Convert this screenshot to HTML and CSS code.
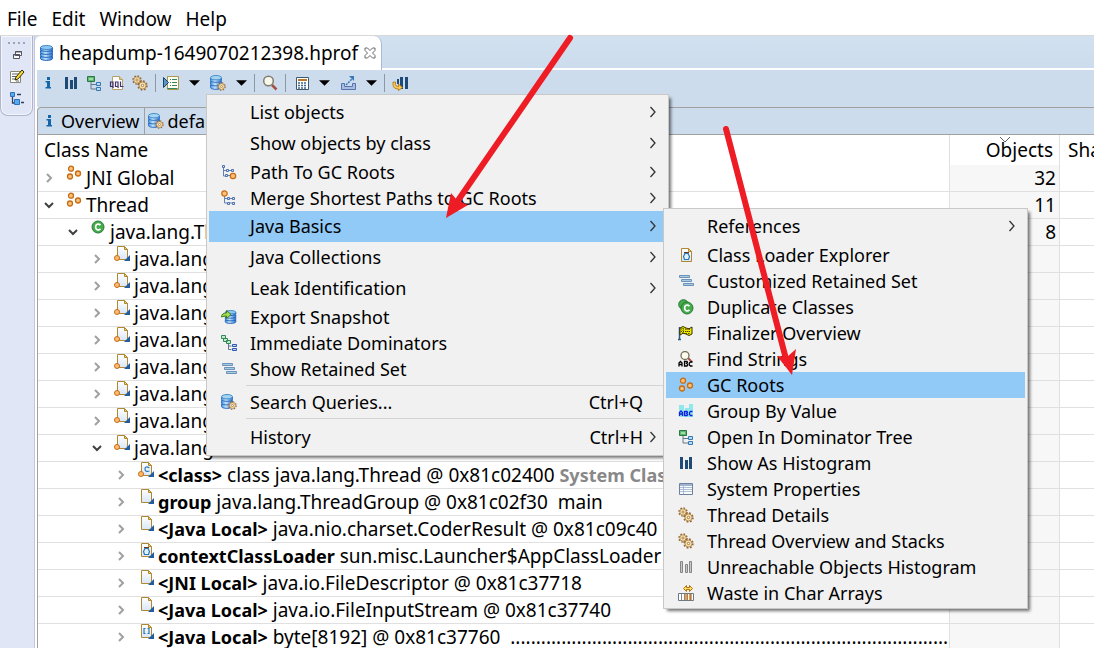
FILE: index.html
```
<!DOCTYPE html>
<html lang="en">
<head>
<meta charset="utf-8">
<title>Memory Analyzer</title>
<link rel="stylesheet" href="styles.css">
</head>
<body>
<svg class="defs" aria-hidden="true">
  <linearGradient id="g-db" x1="0" x2="1"><stop offset="0" stop-color="#3f90dc"/><stop offset=".4" stop-color="#c4e4fa"/><stop offset="1" stop-color="#2c70cc"/></linearGradient>
  <linearGradient id="g-doc" x1="0" x2="0" y1="0" y2="1"><stop offset="0" stop-color="#fff"/><stop offset="1" stop-color="#d8e6f8"/></linearGradient>
  <symbol id="db" viewBox="0 0 16 16"><g fill="url(#g-db)" stroke="#1f62b8"><path d="M1.500 11.500v2c0 2.500 12 2.500 12 0v-2z"/><path d="M1.500 8.500v2c0 2.500 12 2.500 12 0v-2z"/><path d="M1.500 5.500v2c0 2.500 12 2.500 12 0v-2z"/><path d="M1.500 2.500v2c0 2.500 12 2.500 12 0v-2z"/></g><ellipse cx="7.500" cy="2.500" rx="6" ry="2" fill="#8cc8ee" stroke="#3f86c8"/></symbol>
  <symbol id="gear" viewBox="0 0 10 10"><circle cx="5" cy="5" r="4" fill="none" stroke="#94683a" stroke-width="1.500" stroke-dasharray="1.600 1.540"/><circle cx="5" cy="5" r="3.200" fill="#fbe6ae" stroke="#a87c40" stroke-width=".8"/><circle cx="5" cy="5" r="1.100" fill="#fff" stroke="#94683a" stroke-width=".8"/></symbol>
  <symbol id="dbgear" viewBox="0 0 16 16"><g fill="url(#g-db)" stroke="#2c6cc0" stroke-width=".9"><path d="M.5 10v2.500c0 2.500 11 2.500 11 0V10z"/><path d="M.5 6.500V9c0 2.500 11 2.500 11 0V6.500z"/><path d="M.5 3v2.500c0 2.500 11 2.500 11 0V3z"/></g><ellipse cx="6" cy="2.700" rx="5.500" ry="2.200" fill="#a4d4f0" stroke="#4890cc"/><use href="#gear" x="7" y="7" width="9" height="9"/></symbol>
  <symbol id="gears" viewBox="0 0 16 16"><use href="#gear" x="0" y="0" width="10" height="10"/><use href="#gear" x="5" y="5" width="11" height="11"/></symbol>
  <symbol id="info" viewBox="0 0 16 16"><path d="M7 2h3v3H7zM5.500 6H10v6h1v1.500H5.500V12H7V7.500H5.500z" fill="#1466a8"/></symbol>
  <symbol id="bars" viewBox="0 0 16 16"><path d="M2 2h3v12H2zM7 5h3v9H7zM11 2h3v12h-3z" fill="#1f4a78"/></symbol>
  <symbol id="graybars" viewBox="0 0 16 16"><path d="M2.500 2.500h2v11h-2zM7.500 5.500h2v8h-2zM11.500 2.500h2v11h-2z" fill="#c8c8c8" stroke="#858585"/></symbol>
  <symbol id="tree" viewBox="0 0 16 16"><path d="M5 7v7h5M5 9.500h5" fill="none" stroke="#60788c"/><path d="M1.500 1.500h7v5h-7z" fill="#60b870" stroke="#267845"/><path d="M3 3h4v2H3z" fill="#a0dca0"/><path d="M10.500 7.500h4v3h-4zM10.500 12.500h4v3h-4z" fill="#b4dcf8" stroke="#3878b0"/></symbol>
  <symbol id="oql" viewBox="0 0 16 16"><path d="M3.500 1.500h7l3 3v10h-10z" fill="#fff" stroke="#b8a068"/><path d="M10.500 1.500v3h3" fill="#e8c878" stroke="#b8a068"/><path d="M1.500 7h2.500v4.500H1.500zM3 11l1.500 2M6.500 7H9v4.500H6.500zM8 11l1.500 2M11.500 6.500v5h3" fill="none" stroke="#40306c" stroke-width="1.200"/></symbol>
  <symbol id="script" viewBox="0 0 16 16"><path d="M4.500 1.500h11v13h-11z" fill="#fffef0" stroke="#a89850"/><path d="M7 4.500h1M9 4.500h5M7 7.500h1M9 7.500h5M7 10.500h1M9 10.500h5M4.500 13.500h10" stroke="#2e8860"/><path d="M.5 2.500v10l5-5z" fill="#5896c8" stroke="#1a4470"/></symbol>
  <symbol id="search" viewBox="0 0 16 16"><path d="M10 10l4.500 4.500" stroke="#a45040" stroke-width="2.500"/><circle cx="6.500" cy="6" r="4.800" fill="#f8f8ec" stroke="#817d70" stroke-width="1.500"/></symbol>
  <symbol id="calc" viewBox="0 0 16 16"><path d="M3.500 2.500h12v12h-12z" fill="#fff" stroke="#40586c"/><path d="M5 4h9v2H5z" fill="#b8782c"/><path d="M5 8h9M5 10.500h9M5 13h9" stroke="#40668c" stroke-width="1.500" stroke-dasharray="2 1"/></symbol>
  <symbol id="export" viewBox="0 0 16 16"><path d="M1.500 8.500v6h14v-6h-3v3h-8v-3z" fill="#a8bce0" stroke="#5874b0"/><path d="M6 10l6-6" stroke="#3478b8" stroke-width="1.500" stroke-dasharray="2 1"/><path d="M9 1h5v5z" fill="#3478b8"/></symbol>
  <symbol id="barsarrow" viewBox="0 0 16 16"><path d="M5 4h2v5H5zM8 2h3v12H8zM13 2h3v12h-3z" fill="#1f4a78"/><path d="M3.500 7v2.500q0 2 3 2V9l4 3.500-4 3V14q-5.500 0-5.500-4.500V7z" fill="#f8c850" stroke="#b06e10" stroke-width=".8"/></symbol>
  <symbol id="roots" viewBox="0 0 16 16"><g fill="#ffc078" stroke="#c46c14" stroke-width="1.300"><circle cx="5" cy="3.700" r="2.500"/><circle cx="4" cy="11.500" r="2.500"/><circle cx="12" cy="8.500" r="2.500"/></g></symbol>
  <symbol id="class" viewBox="0 0 16 16"><circle cx="8" cy="8" r="6" fill="#45aa4c" stroke="#287c34"/><path d="M10.500 6.200C8 3.800 5.600 5.500 5.600 8s2.400 4.200 4.900 1.800" fill="none" stroke="#fff" stroke-width="1.700"/></symbol>
  <symbol id="doc" viewBox="0 0 16 16"><path d="M3.500.5h7l3 3v10h-10z" fill="url(#g-doc)" stroke="#b08830"/><path d="M10.500.5v3h3z" fill="#f4cf74" stroke="#b08830"/><path d="M16 9v6h-6z" fill="#245c9c"/></symbol>
  <symbol id="docroot" viewBox="0 0 16 16"><use href="#doc" width="16" height="16"/><circle cx="3" cy="12" r="2.500" fill="#ffbc70" stroke="#c46c14"/></symbol>
  <symbol id="docclass" viewBox="0 0 16 16"><use href="#docroot" width="16" height="16"/><path d="M11.500 6Q7 3.500 7 7t4.500 2" fill="none" stroke="#2878b8" stroke-width="1.200"/></symbol>
  <symbol id="pot" viewBox="0 0 16 16"><path d="M6 4h5v1.500H6z" fill="#703820"/><path d="M7 5.500h3l1.500 3-1 3h-4l-1-3z" fill="#e0f2fc" stroke="#2878b8" stroke-width="1.200"/></symbol>
  <symbol id="docloader" viewBox="0 0 16 16"><use href="#doc" width="16" height="16"/><use href="#pot" width="16" height="16"/></symbol>
  <symbol id="docarray" viewBox="0 0 16 16"><use href="#doc" width="16" height="16"/><path d="M7.500 4.500H6v5h1.500M9.500 4.500H11v5H9.500" fill="none" stroke="#2878b8" stroke-width="1.200"/></symbol>
  <symbol id="loader" viewBox="0 0 16 16"><path d="M3.500 1.500h7l3 3v10h-10z" fill="url(#g-doc)" stroke="#b08830"/><path d="M10.500 1.500v3h3z" fill="#f4cf74" stroke="#b08830"/><use href="#pot" y="1" width="16" height="16"/></symbol>
  <symbol id="path" viewBox="0 0 16 16"><path d="M2.500 3v9H5M2.500 6.500h10M6 11.500h5" fill="none" stroke="#6080b0"/><path d="M1.500 1.500h2v2h-2zM5.500 5.500h2v2h-2zM10.500 5.500h2v2h-2zM4.500 10.500h2v2h-2z" fill="#dce8fc" stroke="#5070b0"/><circle cx="12" cy="12" r="2.700" fill="#ffc078" stroke="#c46c14" stroke-width="1.200"/></symbol>
  <symbol id="merge" viewBox="0 0 16 16"><path d="M3.500 6v7H14M4 8.500h10" fill="none" stroke="#6080b0"/><path d="M6.500 7.500h2v2h-2zM11.500 7.500h2v2h-2zM6.500 12.500h2v2h-2zM11.500 12.500h2v2h-2z" fill="#dce8fc" stroke="#5070b0"/><circle cx="3.500" cy="3.500" r="2.700" fill="#ffc078" stroke="#c46c14" stroke-width="1.200"/></symbol>
  <symbol id="dbexport" viewBox="0 0 16 16"><use href="#db" x="3" width="14" height="16"/><path d="M.5 8q0-4 5-4V1.500l4.500 4-4.500 4V7Q3 7 .5 8z" fill="#a8dc50" stroke="#3e7c20"/></symbol>
  <symbol id="immediate" viewBox="0 0 16 16"><path d="M7.500 9v5.500h3M7.500 11h3" fill="none" stroke="#60788c"/><path d="M.5.500h4v3h-4zM2.500 3.500h4v3h-4zM5.500 5.500h4v3h-4z" fill="#c4ecc8" stroke="#2e8858"/><path d="M11.500 9.500h4v2h-4zM11.500 13.500h4v2h-4z" fill="#b4dcf8" stroke="#3058b0"/></symbol>
  <symbol id="retained" viewBox="0 0 16 16"><path d="M1.500 2.500h10v2h-10zM3.500 6.500h10v2h-10zM5.500 10.500h10v2h-10z" fill="#a4cce8" stroke="#6c92b8"/></symbol>
  <symbol id="dup" viewBox="0 0 16 16"><circle cx="5.500" cy="5.500" r="4.800" fill="#45aa4c" stroke="#287c34"/><use href="#class" x="1" y="1" width="16" height="16"/></symbol>
  <symbol id="flag" viewBox="0 0 16 16"><path d="M1.500 2v13M0 14.500h3" stroke="#285888" stroke-width="1.500"/><path d="M2 3q3-3 6 0 3 2 6-1v7q-3 3-6 0-3-2-6 1z" fill="#f4ec00" stroke="#343000"/><path d="M3 4h10M3 6.500h10M4 8.500h8M5 3v5M8 4v5M11 4v5" stroke="#444000" stroke-dasharray="1 1"/></symbol>
  <symbol id="find" viewBox="0 0 16 16"><path d="M10 7l4 4" stroke="#a45040" stroke-width="2"/><circle cx="7" cy="4.500" r="4" fill="#fffff0" stroke="#76705c" stroke-width="1.300"/><path d="M1 15.500V12l1.500-1.500L4 12v3.500M1 13.500h3M6.500 15v-4.500H9q1 1-.5 2 2 1 .5 2.500zM14.500 11h-2l-1.200 1v2l1.200 1h2" fill="none" stroke="#000" stroke-width="1.300"/></symbol>
  <symbol id="group" viewBox="0 0 16 16"><path d="M1 2h5v12H1zM7 5h4v9H7zM11 1h4v13h-4z" fill="#90e8ec"/><path d="M1.500 13V9.500L3 8l1.500 1.500V13M2 11h3M6.500 12.500v-4H9q1 1-.5 2 2 1 .5 2zM14.500 8.500h-2l-1 1v2l1 1h2" fill="none" stroke="#1020e0" stroke-width="1.300"/></symbol>
  <symbol id="props" viewBox="0 0 16 16"><path d="M1.500 2.500h13v11h-13z" fill="#f8fbff" stroke="#7080a0"/><path d="M2 3h12v2H2z" fill="#a0b4d0"/><path d="M2 6.500h12M2 8.500h12M2 10.500h12M5.500 5v8" stroke="#9cb0cc" stroke-width=".8"/></symbol>
  <symbol id="waste" viewBox="0 0 16 16"><path d="M.5 8.500h15v7H.5z" fill="#fff" stroke="#707880"/><path d="M6 9h3v6H6zM11 9h3v6h-3z" fill="#f89838"/><path d="M3.500 9v6M6.500 9v6M9.500 9v6M12.500 9v6" stroke="#808890"/><path d="M5.500 3.500l3-3v2h3v-2l3 3-3 3v-2h-3v2z" fill="#ffe060" stroke="#b07010"/></symbol>
  <symbol id="restore" viewBox="0 0 16 16"><path d="M6.500 4.500h6v4h-6zM4.500 7.500h6v4h-6z" fill="#fff" stroke="#555560"/><path d="M6 5h7M4 8h7" stroke="#555560"/></symbol>
  <symbol id="note" viewBox="0 0 16 16"><path d="M1.500 2.500h10v11h-10z" fill="#fff" stroke="#8a8870"/><path d="M3 5h7M3 7.500h5M3 10h3M7 12h3" stroke="#58666c"/><path d="M6 11l1-3 6-7 2 2-6 7z" fill="#fce038" stroke="#302800"/></symbol>
  <symbol id="navtree" viewBox="0 0 16 16"><path d="M3.500 5v7H6M8 3.500h4M12 11.500h3" fill="none" stroke="#30405c" stroke-width="1.300"/><path d="M1.500 1.500h4v4h-4zM5.500 8.500h5v5h-5z" fill="#58a8ec" stroke="#2c70c4"/></symbol>
  <symbol id="close" viewBox="0 0 12 12"><path d="M1 1h2.500L6 3.500 8.500 1H11v2.500L8.500 6 11 8.500V11H8.500L6 8.500 3.500 11H1V8.500L3.500 6 1 3.500z" fill="#fff" stroke="#686868"/></symbol>
  <symbol id="right" viewBox="0 0 10 12"><path d="M2.500 1L7 6l-4.500 5" fill="none" stroke="currentColor" stroke-width="1.300"/></symbol>
  <symbol id="chev" viewBox="0 0 12 12"><path d="M4 2l4 4-4 4" fill="none" stroke="#a0a0a0" stroke-width="2"/></symbol>
  <symbol id="open" viewBox="0 0 12 12"><path d="M2 4l4 4 4-4" fill="none" stroke="#404040" stroke-width="2"/></symbol>
  <symbol id="tri" viewBox="0 0 12 6"><path d="M0 0h12L6 6z" fill="#000"/></symbol>
</svg>

<nav class="menubar" aria-label="Application menu">
  <button>File</button><button>Edit</button><button>Window</button><button>Help</button>
</nav>

<div class="workbench">
  <aside class="trim">
    <div class="trim-stack">
      <span class="grip"></span>
      <button aria-label="Restore"><svg class="icon"><use href="#restore"/></svg></button>
      <button aria-label="Notes"><svg class="icon"><use href="#note"/></svg></button>
      <button aria-label="Navigation history"><svg class="icon"><use href="#navtree"/></svg></button>
    </div>
  </aside>

  <main class="editor">
    <div class="tabstrip">
      <div class="tab">
        <svg class="icon"><use href="#db"/></svg>
        <span>heapdump-1649070212398.hprof</span>
        <button aria-label="Close"><svg class="close"><use href="#close"/></svg></button>
      </div>
    </div>

    <div class="toolbar" role="toolbar" aria-label="Heap dump tools">
      <button aria-label="Overview"><svg class="icon"><use href="#info"/></svg></button>
      <button aria-label="Histogram"><svg class="icon"><use href="#bars"/></svg></button>
      <button aria-label="Dominator tree"><svg class="icon"><use href="#tree"/></svg></button>
      <button aria-label="OQL"><svg class="icon"><use href="#oql"/></svg></button>
      <button aria-label="Thread overview"><svg class="icon"><use href="#gears"/></svg></button>
      <span class="sep"></span>
      <button aria-label="Run report"><svg class="icon"><use href="#script"/></svg></button>
      <button class="drop" aria-label="Reports"><svg class="tri"><use href="#tri"/></svg></button>
      <button aria-label="Query browser"><svg class="icon"><use href="#dbgear"/></svg></button>
      <button class="drop" aria-label="Queries"><svg class="tri"><use href="#tri"/></svg></button>
      <span class="sep"></span>
      <button aria-label="Find object"><svg class="icon"><use href="#search"/></svg></button>
      <span class="sep"></span>
      <button aria-label="Calculate retained size"><svg class="icon"><use href="#calc"/></svg></button>
      <button class="drop" aria-label="Calculate options"><svg class="tri"><use href="#tri"/></svg></button>
      <button aria-label="Export"><svg class="icon"><use href="#export"/></svg></button>
      <button class="drop" aria-label="Export options"><svg class="tri"><use href="#tri"/></svg></button>
      <span class="sep"></span>
      <button aria-label="Compare"><svg class="icon"><use href="#barsarrow"/></svg></button>
    </div>

    <div class="pages">
      <button><svg class="icon"><use href="#info"/></svg>Overview</button>
      <button><svg class="icon"><use href="#dbgear"/></svg>default_report</button>
    </div>

    <table class="heap">
      <colgroup><col><col class="c-objects"><col class="c-shallow"></colgroup>
      <thead><tr><th>Class Name</th><th class="num sorted"><svg class="sort" viewBox="0 0 12 6"><path d="M1 0l5 5 5-5" fill="none" stroke="#606060"/></svg>Objects</th><th>Shallow</th></tr></thead>
      <tbody>
        <tr><td><div class="node"><svg class="twist"><use href="#chev"/></svg><svg class="icon"><use href="#roots"/></svg><span>JNI Global</span></div></td><td class="num">32</td><td></td></tr>
        <tr><td><div class="node"><svg class="twist"><use href="#open"/></svg><svg class="icon"><use href="#roots"/></svg><span>Thread</span></div></td><td class="num">11</td><td></td></tr>
        <tr><td><div class="node l1"><svg class="twist"><use href="#open"/></svg><svg class="icon"><use href="#class"/></svg><span>java.lang.Thread</span></div></td><td class="num">8</td><td></td></tr>
        <tr><td><div class="node l2"><svg class="twist"><use href="#chev"/></svg><svg class="icon"><use href="#docroot"/></svg><span>java.lang.Thread</span></div></td><td class="num"></td><td></td></tr>
        <tr><td><div class="node l2"><svg class="twist"><use href="#chev"/></svg><svg class="icon"><use href="#docroot"/></svg><span>java.lang.Thread</span></div></td><td class="num"></td><td></td></tr>
        <tr><td><div class="node l2"><svg class="twist"><use href="#chev"/></svg><svg class="icon"><use href="#docroot"/></svg><span>java.lang.Thread</span></div></td><td class="num"></td><td></td></tr>
        <tr><td><div class="node l2"><svg class="twist"><use href="#chev"/></svg><svg class="icon"><use href="#docroot"/></svg><span>java.lang.Thread</span></div></td><td class="num"></td><td></td></tr>
        <tr><td><div class="node l2"><svg class="twist"><use href="#chev"/></svg><svg class="icon"><use href="#docroot"/></svg><span>java.lang.Thread</span></div></td><td class="num"></td><td></td></tr>
        <tr><td><div class="node l2"><svg class="twist"><use href="#chev"/></svg><svg class="icon"><use href="#docroot"/></svg><span>java.lang.Thread</span></div></td><td class="num"></td><td></td></tr>
        <tr><td><div class="node l2"><svg class="twist"><use href="#chev"/></svg><svg class="icon"><use href="#docroot"/></svg><span>java.lang.Thread</span></div></td><td class="num"></td><td></td></tr>
        <tr><td><div class="node l2"><svg class="twist"><use href="#open"/></svg><svg class="icon"><use href="#docroot"/></svg><span>java.lang.Thread</span></div></td><td class="num"></td><td></td></tr>
        <tr><td><div class="node l3"><svg class="twist"><use href="#chev"/></svg><svg class="icon"><use href="#docclass"/></svg><span><b>&lt;class&gt;</b> class java.lang.Thread @ 0x81c02400 <b class="root">System Class</b></span></div></td><td class="num"></td><td></td></tr>
        <tr><td><div class="node l3"><svg class="twist"><use href="#chev"/></svg><svg class="icon"><use href="#doc"/></svg><span><b>group</b> java.lang.ThreadGroup @ 0x81c02f30&nbsp; main</span></div></td><td class="num"></td><td></td></tr>
        <tr><td><div class="node l3"><svg class="twist"><use href="#chev"/></svg><svg class="icon"><use href="#doc"/></svg><span><b>&lt;Java Local&gt;</b> java.nio.charset.CoderResult @ 0x81c09c40</span></div></td><td class="num"></td><td></td></tr>
        <tr><td><div class="node l3"><svg class="twist"><use href="#chev"/></svg><svg class="icon"><use href="#docloader"/></svg><span><b>contextClassLoader</b> sun.misc.Launcher$AppClassLoader @</span></div></td><td class="num"></td><td></td></tr>
        <tr><td><div class="node l3"><svg class="twist"><use href="#chev"/></svg><svg class="icon"><use href="#doc"/></svg><span><b>&lt;JNI Local&gt;</b> java.io.FileDescriptor @ 0x81c37718</span></div></td><td class="num"></td><td></td></tr>
        <tr><td><div class="node l3"><svg class="twist"><use href="#chev"/></svg><svg class="icon"><use href="#doc"/></svg><span><b>&lt;Java Local&gt;</b> java.io.FileInputStream @ 0x81c37740</span></div></td><td class="num"></td><td></td></tr>
        <tr><td><div class="node l3"><svg class="twist"><use href="#chev"/></svg><svg class="icon"><use href="#docarray"/></svg><span><b>&lt;Java Local&gt;</b> byte[8192] @ 0x81c37760&nbsp; ..............................................................................................................................</span></div></td><td class="num"></td><td></td></tr>
      </tbody>
    </table>
  </main>
</div>

<div class="menu menu-queries" role="menu">
  <button class="item tall" role="menuitem"><span class="label">List objects</span><svg class="more"><use href="#right"/></svg></button>
  <button class="item tall" role="menuitem"><span class="label">Show objects by class</span><svg class="more"><use href="#right"/></svg></button>
  <button class="item" role="menuitem"><svg class="icon"><use href="#path"/></svg><span class="label">Path To GC Roots</span><svg class="more"><use href="#right"/></svg></button>
  <button class="item" role="menuitem"><svg class="icon"><use href="#merge"/></svg><span class="label">Merge Shortest Paths to GC Roots</span><svg class="more"><use href="#right"/></svg></button>
  <button class="item tall active" role="menuitem"><span class="label">Java Basics</span><svg class="more"><use href="#right"/></svg></button>
  <button class="item tall" role="menuitem"><span class="label">Java Collections</span><svg class="more"><use href="#right"/></svg></button>
  <button class="item tall" role="menuitem"><span class="label">Leak Identification</span><svg class="more"><use href="#right"/></svg></button>
  <button class="item" role="menuitem"><svg class="icon"><use href="#dbexport"/></svg><span class="label">Export Snapshot</span></button>
  <button class="item" role="menuitem"><svg class="icon"><use href="#immediate"/></svg><span class="label">Immediate Dominators</span></button>
  <button class="item" role="menuitem"><svg class="icon"><use href="#retained"/></svg><span class="label">Show Retained Set</span></button>
  <hr>
  <button class="item" role="menuitem"><svg class="icon"><use href="#dbgear"/></svg><span class="label">Search Queries...</span><span class="key">Ctrl+Q</span></button>
  <hr>
  <button class="item tall" role="menuitem"><span class="label">History</span><span class="key">Ctrl+H</span><svg class="more"><use href="#right"/></svg></button>
</div>

<div class="menu menu-basics" role="menu">
  <button class="item tall" role="menuitem"><span class="label">References</span><svg class="more"><use href="#right"/></svg></button>
  <button class="item" role="menuitem"><svg class="icon"><use href="#loader"/></svg><span class="label">Class Loader Explorer</span></button>
  <button class="item" role="menuitem"><svg class="icon"><use href="#retained"/></svg><span class="label">Customized Retained Set</span></button>
  <button class="item" role="menuitem"><svg class="icon"><use href="#dup"/></svg><span class="label">Duplicate Classes</span></button>
  <button class="item" role="menuitem"><svg class="icon"><use href="#flag"/></svg><span class="label">Finalizer Overview</span></button>
  <button class="item" role="menuitem"><svg class="icon"><use href="#find"/></svg><span class="label">Find Strings</span></button>
  <button class="item active" role="menuitem"><svg class="icon"><use href="#roots"/></svg><span class="label">GC Roots</span></button>
  <button class="item" role="menuitem"><svg class="icon"><use href="#group"/></svg><span class="label">Group By Value</span></button>
  <button class="item" role="menuitem"><svg class="icon"><use href="#tree"/></svg><span class="label">Open In Dominator Tree</span></button>
  <button class="item" role="menuitem"><svg class="icon"><use href="#bars"/></svg><span class="label">Show As Histogram</span></button>
  <button class="item" role="menuitem"><svg class="icon"><use href="#props"/></svg><span class="label">System Properties</span></button>
  <button class="item" role="menuitem"><svg class="icon"><use href="#gears"/></svg><span class="label">Thread Details</span></button>
  <button class="item" role="menuitem"><svg class="icon"><use href="#gears"/></svg><span class="label">Thread Overview and Stacks</span></button>
  <button class="item" role="menuitem"><svg class="icon"><use href="#graybars"/></svg><span class="label">Unreachable Objects Histogram</span></button>
  <button class="item" role="menuitem"><svg class="icon"><use href="#waste"/></svg><span class="label">Waste in Char Arrays</span></button>
</div>

<svg class="arrows" viewBox="0 0 400 360" aria-hidden="true">
  <g fill="#ee1c25" stroke="#ee1c25">
    <path d="M130 8L19 169" stroke-width="6" stroke-linecap="round"/>
    <path d="M6 188l5-25 6 7 11 5z" stroke="none"/>
    <path d="M286 99l60 230" stroke-width="6" stroke-linecap="round"/>
    <path d="M352 345l-15-19 10 1 9-8z" stroke="none"/>
  </g>
</svg>
</body>
</html>
```
FILE: styles.css
```
* { box-sizing: border-box; }

body {
  margin: 0;
  height: 100vh;
  display: flex;
  flex-direction: column;
  overflow: hidden;
  position: relative;
  background: #fff;
  color: #000;
  font: 19px/26px "Noto Sans", "Open Sans", sans-serif;
}

button {
  margin: 0;
  padding: 0;
  border: 0;
  background: none;
  color: inherit;
  font: inherit;
  white-space: nowrap;
}

svg { display: block; flex: none; }
.defs { position: absolute; width: 0; height: 0; }
.icon { width: 16px; height: 16px; }

.menubar {
  flex: none;
  display: flex;
  gap: 14px;
  height: 35px;
  padding: 2px 7px 0;
  align-items: center;
}

.workbench {
  flex: 1;
  min-height: 0;
  display: flex;
  border-top: 1px solid #d8d8d8;
}

.trim {
  flex: none;
  width: 35px;
  background: #e0e6f6;
  border-right: 1px solid #c4c8d4;
}

.trim-stack {
  width: 33px;
  height: 80px;
  padding-top: 6px;
  display: flex;
  flex-direction: column;
  align-items: center;
  gap: 6px;
  border: 1px solid #b0b4cc;
  border-top: 0;
  border-radius: 0 0 8px 8px;
  box-shadow: inset 0 0 0 1px #f4f6fc;
}

.grip {
  width: 17px;
  height: 2px;
  margin-bottom: -3px;
  background: repeating-linear-gradient(90deg, #a0a4b0 0 2px, transparent 2px 5px);
}

.editor {
  flex: 1;
  min-width: 0;
  display: flex;
  flex-direction: column;
  padding-left: 2px;
  background: #fff;
}

.tabstrip {
  flex: none;
  display: flex;
  height: 34px;
  margin-left: -2px;
  padding-bottom: 2px;
  background: linear-gradient(#d2e1f0, #cddcec) content-box;
}

.tab {
  display: flex;
  align-items: center;
  gap: 4px;
  height: 34px;
  padding: 0 5px 0 4px;
  background: #fff;
  border-right: 1px solid #a9b8d4;
  border-radius: 6px 8px 0 0;
}

.tab .close { width: 12px; height: 12px; margin-left: 2px; }

.toolbar {
  flex: none;
  display: flex;
  align-items: center;
  gap: 7px;
  height: 37px;
  padding: 0 3px 11px;
  background: #cddcec;
}

.drop { width: 17px; display: flex; justify-content: center; }
.tri { width: 11px; height: 6px; }
.sep { width: 1px; height: 18px; background: #8c98a4; }
.drop + .sep { margin-left: -3px; }

.pages {
  flex: none;
  display: flex;
  height: 28px;
  font-size: 18px;
  background: #cddcec;
  border: 1px solid #a0a0a0;
  border-right: 0;
  border-radius: 4px 0 0 0;
}

.pages button {
  display: flex;
  align-items: center;
  gap: 4px;
  padding: 0 4px 0 3px;
  border-right: 1px solid #a0a0a0;
}

.heap {
  width: 100%;
  table-layout: fixed;
  border-collapse: separate;
  border-spacing: 0;
  border-left: 1px solid #a0a0a0;
}

.c-objects { width: 110px; }
.c-shallow { width: 35px; }

.heap th {
  height: 30px;
  padding: 0 6px;
  font-weight: 400;
  text-align: left;
  white-space: nowrap;
  overflow: hidden;
}

.heap th + th, .heap td + td { border-left: 1px solid #e0e0e0; }
.heap th:last-child { padding-left: 8px; }

.heap td {
  height: 27px;
  padding: 0;
  border-bottom: 1px solid #e0e0e0;
}

.heap .num { text-align: right; }
.heap td.num { padding-right: 3px; background: #f7f7f7; }
.sorted { position: relative; }
.sort { position: absolute; top: 2px; left: 49px; width: 12px; height: 6px; }

.node {
  display: flex;
  align-items: center;
  gap: 4px;
  height: 26px;
  padding-left: 5px;
  overflow: hidden;
  white-space: pre;
}

.node b { font-size: 18px; }
.node .icon { align-self: flex-start; }
.twist { width: 12px; height: 12px; margin-right: 7px; }
.l1 { padding-left: 29px; }
.l2 { padding-left: 53px; }
.l3 { padding-left: 77px; }
.root { color: #888; }

.menu {
  position: absolute;
  padding: 2px;
  font-size: 18px;
  background: #f1f1f1;
  border: 1px solid #c8c8c8;
  box-shadow: 3px 3px 3px -1px rgba(0, 0, 0, .55);
}

.menu-queries { left: 206px; top: 94px; width: 463px; }
.menu-basics { left: 663px; top: 208px; width: 365px; }

.item {
  display: flex;
  align-items: center;
  width: 100%;
  height: 26px;
  padding: 0 8px 0 12px;
  text-align: left;
}

.tall { height: 31px; padding-bottom: 1px; }
.active { background: #91c9f7; }
.label { flex: 1; margin-left: 29px; }
.item .icon + .label { margin-left: 13px; }
.key { margin-right: 15px; }
.key:has(+ .more) { margin-right: 5px; }
.more { width: 10px; height: 12px; color: #333; }

.menu hr {
  height: 1px;
  margin: 3px 1px 3px 37px;
  border: 0;
  background: #d4d4d4;
}

.arrows {
  position: absolute;
  left: 440px;
  top: 30px;
  width: 400px;
  height: 360px;
  pointer-events: none;
}
```
